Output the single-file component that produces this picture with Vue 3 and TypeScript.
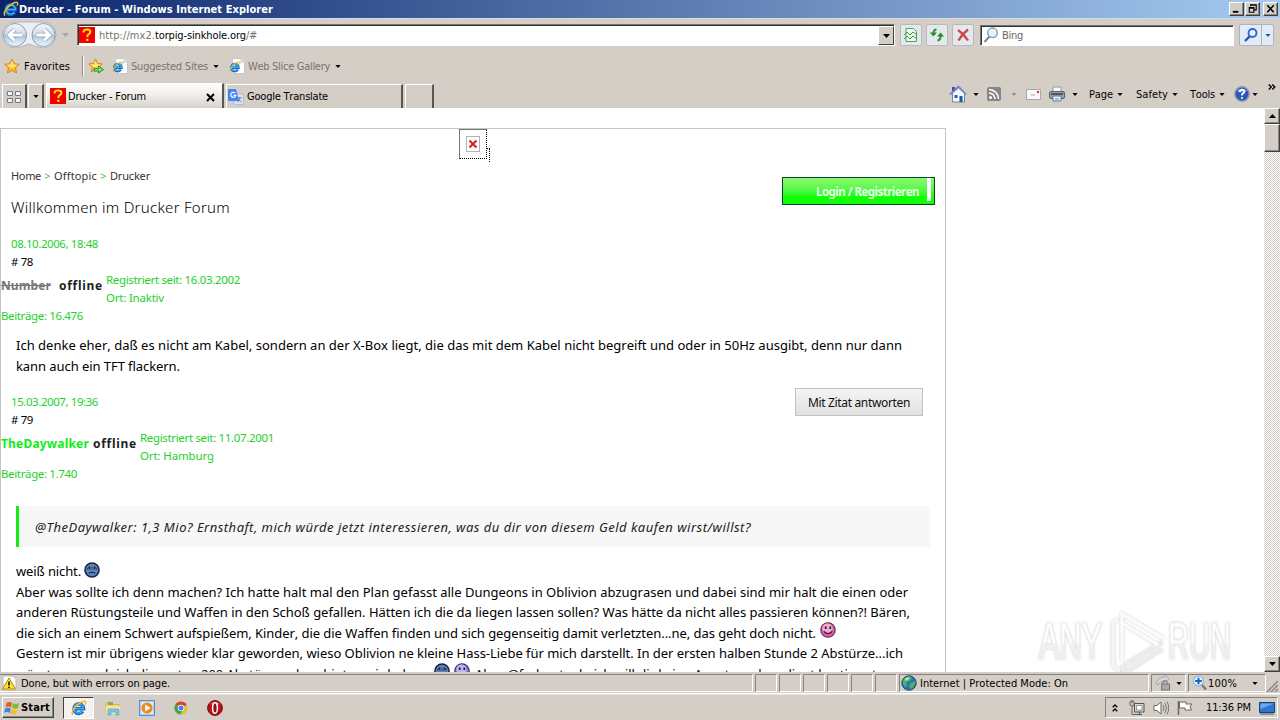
<script setup lang="ts">
import type { Directive } from 'vue'

/* Spreads letters so that a label takes the given width in pixels. */
const vFit: Directive<HTMLElement, number> = {
  mounted(el, { value }) {
    const natural = el.getBoundingClientRect().width
    const count = (el.textContent ?? '').length
    if (count > 0) el.style.letterSpacing = `${(value - natural) / count}px`
  },
}

interface Post {
  id: number
  date: string
  dateW: number
  user: string
  userW: number
  kind: string
  since: string
  place: string
  placeW: number
  count: string
  countW: number
}

const posts: Post[] = [
  { id: 78, date: '08.10.2006, 18:48', dateW: 87, user: 'Number', userW: 50, kind: 'struck', since: 'Registriert seit: 16.03.2002', place: 'Ort: Inaktiv', placeW: 58, count: 'Beiträge: 16.476', countW: 82 },
  { id: 79, date: '15.03.2007, 19:36', dateW: 87, user: 'TheDaywalker', userW: 88, kind: 'lime', since: 'Registriert seit: 11.07.2001', place: 'Ort: Hamburg', placeW: 74, count: 'Beiträge: 1.740', countW: 76 },
]
const first = posts[0]
const second = posts[1]
const panes = [1, 2, 3, 4, 5, 6]
</script>

<template>
  <svg class="defs" width="0" height="0">
    <symbol id="ie" viewBox="0 0 16 16">
      <path d="M4 8.8H12.6A4.8 4.8 0 1 0 11.8 11.4" fill="none" stroke="#1466bd" stroke-width="3.4" />
      <path d="M4 8.6H12.4A4.7 4.7 0 1 0 11.5 11.2" fill="none" stroke="#45b3f2" stroke-width="1.4" />
      <path d="M2.2 14.6C-.8 13 3.5 6.6 8.2 3.5C12.5.6 16 .2 14.2 4.6" fill="none" stroke="#f0b92c" stroke-width="1.5" />
    </symbol>
    <symbol id="iepage" viewBox="0 0 16 16">
      <path d="M3.5.5H12L15.5 4V15.5H3.5Z" fill="#fff" stroke="#c3c9d2" />
      <path d="M12 .5V4H15.5" fill="#dde5ee" stroke="#c3c9d2" />
      <use href="#ie" x="0" y="3" width="12" height="12" />
    </symbol>
    <symbol id="star" viewBox="0 0 16 16">
      <path d="M8 1L10.2 5.7L15.3 6.3L11.5 9.8L12.6 15L8 12.4L3.4 15L4.5 9.8L.7 6.3L5.8 5.7Z" fill="#fdbb2d" stroke="#d18a1c" />
      <path d="M8 2.500L9.700 6.500L13.500 7L10 9.500L8 10L5 9L2.500 7L6.300 6.500Z" fill="#ffe26a" />
    </symbol>
    <symbol id="q" viewBox="0 0 16 16">
      <rect width="16" height="16" fill="#f00000" />
      <path d="M4.600 5.500V4.500Q4.800 2.400 8 2.400T11.400 4.800Q11.400 6.200 9.800 7.200T8.300 10" fill="none" stroke="#ffe800" stroke-width="2" />
      <rect x="7.200" y="11.700" width="2.200" height="2.200" fill="#ffe800" />
    </symbol>
    <symbol id="down" viewBox="0 0 7 4"><path d="M0 0H7L3.500 4Z" fill="currentColor" /></symbol>
    <symbol id="sad" viewBox="0 0 16 16">
      <circle cx="8" cy="8" r="7" fill="#5a86bd" stroke="#16244a" stroke-width="1.600" />
      <path d="M3 6.800Q5 3.400 7.500 5.500Q8 6 8.500 5.500Q11 3.400 13 6.800Z" fill="#fff" stroke="#16244a" stroke-width=".9" />
      <path d="M5.500 5V7M10.500 5V7" stroke="#16244a" stroke-width="1.200" />
      <path d="M4.800 11.300Q8 9.200 11.200 11.300" fill="none" stroke="#16244a" stroke-width="1.200" />
    </symbol>
    <symbol id="pink" viewBox="0 0 16 16">
      <circle cx="8" cy="8" r="7.200" fill="#cf6aa0" stroke="#682b60" stroke-width="1.200" />
      <circle cx="7.400" cy="6.400" r="5" fill="#eeaccd" />
      <path d="M5.700 4.500V7M10.300 4.500V7" stroke="#321235" stroke-width="1.700" />
      <path d="M3.700 9.300Q8 14 12.300 9.300" fill="none" stroke="#6a124b" stroke-width="1.300" />
    </symbol>
  </svg>

  <div class="screen">
    <header class="title">
      <svg class="i16"><use href="#ie" /></svg>
      <b v-fit="254" class="fit">Drucker - Forum - Windows Internet Explorer</b>
      <span class="wb push"><svg viewBox="0 0 14 12"><path d="M3 9H9" stroke="#000" stroke-width="2" /></svg></span>
      <span class="wb"><svg viewBox="0 0 14 12"><path d="M5 3V1.500H11V7H9M5 2H11M3 5H9M3.500 4.500H8.500V9.500H3.500Z" fill="none" stroke="#000" stroke-width="1.200" /></svg></span>
      <span class="wb gap"><svg viewBox="0 0 14 12"><path d="M3.500 2L10.500 9.500M10.500 2L3.500 9.500" stroke="#000" stroke-width="1.700" /></svg></span>
    </header>

    <div class="nav">
      <svg class="arrows" viewBox="0 0 58 28">
        <defs>
          <linearGradient id="gl" x1="0" y1="0" x2="0" y2="1">
            <stop offset="0" stop-color="#f4f7fb" /><stop offset=".48" stop-color="#cfdae8" /><stop offset=".5" stop-color="#adc3da" /><stop offset="1" stop-color="#eef8fe" />
          </linearGradient>
        </defs>
        <path d="M15 1H43A13 13 0 0 1 43 27Q36 26 29 23Q22 26 15 27A13 13 0 0 1 15 1Z" fill="#eceef3" stroke="#b4b6be" />
        <circle cx="15" cy="14" r="11.500" fill="url(#gl)" stroke="#8f9cb0" />
        <circle cx="43.500" cy="14" r="11.500" fill="url(#gl)" stroke="#8f9cb0" />
        <path d="M22 14H10M14.500 8.500L9 14L14.500 19.500M36.500 14H48.500M44 8.500L49.500 14L44 19.500" fill="none" stroke="#8da3bd" stroke-width="4.400" />
        <path d="M22 14H10M14.500 8.500L9 14L14.500 19.500M36.500 14H48.500M44 8.500L49.500 14L44 19.500" fill="none" stroke="#fff" stroke-width="3" />
      </svg>
      <svg class="dn pale"><use href="#down" /></svg>
      <div class="address">
        <svg class="i16"><use href="#q" /></svg>
        <span class="url"><span v-fit="56" class="fit gray">http://mx2.</span><span v-fit="91" class="fit">torpig-sinkhole.org</span><span v-fit="11" class="fit gray">/#</span></span>
        <span class="drop"><svg class="dn"><use href="#down" /></svg></span>
      </div>
      <span class="tb first"><svg class="i16" viewBox="0 0 16 16"><path d="M3 1.500H10.500L13.500 4.500V14.500H3Z" fill="#eefaed" stroke="#54a35a" /><path d="M1 8L4 5L7 8L10 5L14 8M1 12L4 9L7 12L10 9L14 12" fill="none" stroke="#3c9a49" /></svg></span>
      <span class="tb"><svg class="i16" viewBox="0 0 16 16"><path d="M7.500 2.500Q4.500 2.500 4.500 6" fill="none" stroke="#2e9a36" stroke-width="2" /><path d="M.8 5.500H8L4.400 9.500ZM8 9.500H15.200L11.600 5.500Z" fill="#258d2d" /><path d="M8.500 13.500Q11.600 13.300 11.600 9" fill="none" stroke="#258d2d" stroke-width="2" /></svg></span>
      <span class="tb"><svg class="i16" viewBox="0 0 16 16"><path d="M3 3Q9 7 13 13.500M13 2.500Q7 7 3.500 13.500" fill="none" stroke="#cf4848" stroke-width="2.300" /></svg></span>
      <div class="search">
        <svg class="i16" viewBox="0 0 16 16"><path d="M6.500 9.500L1.500 15" stroke="#79899c" stroke-width="2" /><circle cx="9.500" cy="5.800" r="4.800" fill="#e8f4fc" stroke="#8b9cae" stroke-width="1.400" /></svg>
        <span v-fit="21" class="fit">Bing</span>
      </div>
      <div class="go">
        <span><svg class="i16" viewBox="0 0 16 16"><path d="M7 9L2 14" stroke="#2552b8" stroke-width="2.400" /><circle cx="9.500" cy="6" r="4" fill="#eaf3ff" stroke="#2a67d8" stroke-width="1.900" /></svg></span>
        <span class="small"><svg class="dn s blue"><use href="#down" /></svg></span>
      </div>
    </div>

    <div class="favs">
      <svg class="i16"><use href="#star" /></svg>
      <span v-fit="46" class="fit favlabel">Favorites</span>
      <i class="vline" />
      <svg class="i16 add" viewBox="0 0 16 16"><use href="#star" width="15" height="15" /><path d="M6 10.500H10.500V8L15.500 11.500L10.500 15V13H6Z" fill="#7ee06c" stroke="#2b8c2b" /></svg>
      <svg class="i16 pg1"><use href="#iepage" /></svg>
      <span v-fit="77" class="fit gray l1">Suggested Sites</span>
      <svg class="dn s"><use href="#down" /></svg>
      <svg class="i16 pg2"><use href="#iepage" /></svg>
      <span v-fit="82" class="fit gray l1">Web Slice Gallery</span>
      <svg class="dn s"><use href="#down" /></svg>
    </div>

    <div class="tabs">
      <span class="tab quick"><svg class="i16" viewBox="0 0 16 16"><path d="M1.500 2.500H6.500V6.500H1.500ZM9.500 2.500H14.500V6.500H9.500ZM1.500 9.500H6.500V13.500H1.500ZM9.500 9.500H14.500V13.500H9.500Z" fill="#f4f5f8" stroke="#6f7788" /></svg></span>
      <span class="tab qd"><svg class="dn s"><use href="#down" /></svg></span>
      <span class="tab active">
        <svg class="i16"><use href="#q" /></svg><span v-fit="78" class="fit">Drucker - Forum</span>
        <svg class="close" viewBox="0 0 9 9"><path d="M1 1L8 8M8 1L1 8" stroke="#000" stroke-width="2" /></svg>
      </span>
      <span class="tab other">
        <svg class="i16" viewBox="0 0 16 16"><rect x="6" y="5" width="9.500" height="10.500" rx="1" fill="#dde2ea" stroke="#a9b1be" stroke-width=".7" /><path d="M9 9H14M11.500 8V9Q11.500 12 9.500 13M10 10.500L13.500 13" stroke="#6385bf" fill="none" /><path d="M1 0H8L11 12H1Q0 12 0 11V1Q0 0 1 0Z" fill="#4285f4" /><path d="M7.200 4.200A2.500 2.500 0 1 0 7.800 6.300H5.500" fill="none" stroke="#fff" stroke-width="1.200" /></svg>
        <span v-fit="81" class="fit">Google Translate</span>
      </span>
      <span class="tab blank" />

      <div class="cmd">
        <svg class="i18" viewBox="0 0 18 18"><path d="M3 2H6V6H3Z" fill="#3b4aa8" /><path d="M3.500 8V17H15.500V8L9.500 3Z" fill="#f2f5fb" stroke="#7482a0" /><path d="M1 9.500L9.500 1.500L17 9.500" fill="none" stroke="#6f86c6" stroke-width="1.800" /><rect x="10.500" y="11" width="3" height="6" fill="#1d599f" /><rect x="5.500" y="10" width="3" height="3" fill="#315cae" /></svg>
        <svg class="dn s a"><use href="#down" /></svg>
        <svg class="i14 b" viewBox="0 0 14 14"><rect width="14" height="14" rx="2" fill="#858585" /><circle cx="3.500" cy="10.500" r="1.500" fill="#fff" /><path d="M2 6A6 6 0 0 1 8 12M2 2.500A9.500 9.500 0 0 1 11.500 12" fill="none" stroke="#fff" stroke-width="1.600" /></svg>
        <svg class="dn s pale2 c"><use href="#down" /></svg>
        <svg class="mail" viewBox="0 0 15 11"><rect x=".5" y=".5" width="14" height="10" fill="#f8f8f8" stroke="#aaa" /><rect x="11" y="2" width="2" height="2" fill="#d32b36" /><path d="M5 6H9" stroke="#aaa" /></svg>
        <svg class="i16 e" viewBox="0 0 16 16"><path d="M4 1H12V6H4Z" fill="#f8fbff" stroke="#999" /><rect x=".5" y="5.500" width="15" height="7" rx="1.500" fill="#9d9fa4" stroke="#5e6065" /><path d="M2 8H14" stroke="#3d4044" stroke-width="1.500" /><path d="M4 10H12V15H4Z" fill="#e5f2ff" stroke="#607a9a" /><path d="M6 13H10" stroke="#3a91d8" /></svg>
        <svg class="dn s f"><use href="#down" /></svg>
        <span v-fit="24" class="fit g">Page</span><svg class="dn s"><use href="#down" /></svg>
        <span v-fit="32" class="fit h">Safety</span><svg class="dn s"><use href="#down" /></svg>
        <span v-fit="25" class="fit k">Tools</span><svg class="dn s"><use href="#down" /></svg>
        <svg class="i16 m" viewBox="0 0 16 16"><circle cx="8" cy="8" r="7.200" fill="#2e56b4" stroke="#8b9bb7" stroke-width="1.500" /><path d="M3 5A6 5 0 0 1 13 5Q8 8 3 5" fill="#799ae0" /><path d="M5.700 6Q5.900 3.700 8 3.700T10.300 5.700Q10.300 7 8 8.200V9.500" fill="none" stroke="#fff" stroke-width="1.700" /><rect x="7.100" y="11" width="1.800" height="1.800" fill="#fff" /></svg>
        <svg class="dn s n"><use href="#down" /></svg>
        <svg class="more" viewBox="0 0 8 6"><path d="M.8.5L3.300 3L.8 5.500M4.300.5L6.800 3L4.300 5.500" fill="none" stroke="#000" stroke-width="1.400" /></svg>
      </div>
    </div>

    <main class="view">
      <div class="doc">
        <div class="sheet">
          <div class="broken">
            <svg viewBox="0 0 14 16"><rect x=".5" y=".5" width="13" height="15" fill="#fff" stroke="#b0b5b0" /><path d="M3.500 4.500L10.500 11.500M10.500 4.500L3.500 11.500" stroke="#cc2929" stroke-width="2.200" /></svg>
            <i class="tail" />
          </div>
          <div class="toprow">
            <div>
              <nav class="crumbs"><span v-fit="30" class="fit">Home</span><em>&gt;</em><span v-fit="43" class="fit">Offtopic</span><em>&gt;</em><span v-fit="40" class="fit">Drucker</span></nav>
              <h1><span v-fit="219" class="fit">Willkommen im Drucker Forum</span></h1>
            </div>
            <div class="login"><span v-fit="103" class="fit">Login / Registrieren</span><i /></div>
          </div>

          <section class="meta">
            <div class="in green"><span v-fit="first.dateW" class="fit">{{ first.date }}</span></div>
            <div class="in num"><span v-fit="22" class="fit"># {{ first.id }}</span></div>
            <div class="who">
              <b v-fit="first.userW" :class="['fit', first.kind]">{{ first.user }}</b>
              <b v-fit="44" class="fit off wide">offline</b>
              <div class="green"><div><span v-fit="134" class="fit">{{ first.since }}</span></div><div><span v-fit="first.placeW" class="fit">{{ first.place }}</span></div></div>
            </div>
            <div class="green"><span v-fit="first.countW" class="fit">{{ first.count }}</span></div>
          </section>
          <div class="body one">
            <div><span v-fit="886" class="fit">Ich denke eher, daß es nicht am Kabel, sondern an der X-Box liegt, die das mit dem Kabel nicht begreift und oder in 50Hz ausgibt, denn nur dann</span></div>
            <div><span v-fit="164" class="fit">kann auch ein TFT flackern.</span></div>
          </div>

          <section class="meta two">
            <div class="in green"><span v-fit="second.dateW" class="fit">{{ second.date }}</span></div>
            <div class="in num"><span v-fit="22" class="fit"># {{ second.id }}</span></div>
            <div class="who">
              <b v-fit="second.userW" :class="['fit', second.kind]">{{ second.user }}</b>
              <b v-fit="44" class="fit off">offline</b>
              <div class="green"><div><span v-fit="134" class="fit">{{ second.since }}</span></div><div><span v-fit="second.placeW" class="fit">{{ second.place }}</span></div></div>
            </div>
            <div class="green"><span v-fit="second.countW" class="fit">{{ second.count }}</span></div>
            <div class="reply"><span v-fit="102" class="fit">Mit Zitat antworten</span></div>
          </section>
          <blockquote><span v-fit="716" class="fit">@TheDaywalker: 1,3 Mio? Ernsthaft, mich würde jetzt interessieren, was du dir von diesem Geld kaufen wirst/willst?</span></blockquote>
          <div class="body last">
            <div><span v-fit="65" class="fit">weiß nicht.</span><svg class="smile one-up"><use href="#sad" /></svg></div>
            <div><span v-fit="892" class="fit">Aber was sollte ich denn machen? Ich hatte halt mal den Plan gefasst alle Dungeons in Oblivion abzugrasen und dabei sind mir halt die einen oder</span></div>
            <div><span v-fit="894" class="fit">anderen Rüstungsteile und Waffen in den Schoß gefallen. Hätten ich die da liegen lassen sollen? Was hätte da nicht alles passieren können?! Bären,</span></div>
            <div><span v-fit="800" class="fit">die sich an einem Schwert aufspießem, Kinder, die die Waffen finden und sich gegenseitig damit verletzten...ne, das geht doch nicht.</span><svg class="smile up"><use href="#pink" /></svg></div>
            <div><span v-fit="887" class="fit">Gestern ist mir übrigens wieder klar geworden, wieso Oblivion ne kleine Hass-Liebe für mich darstellt. In der ersten halben Stunde 2 Abstürze...ich</span></div>
            <div><span v-fit="412" class="fit">wüsste gern, ob ich die ersten 200 Abstürze schon hinter mir habe...</span><svg class="smile far"><use href="#sad" /></svg><svg class="smile violet"><use href="#pink" /></svg><span v-fit="445" class="fit tailtext">Aber @farbentaub, ich will dir keine Angst machen, liegt bestimmt nur an</span></div>
          </div>
        </div>
      </div>
      <div class="scroll">
        <span class="sb"><svg class="dn flip"><use href="#down" /></svg></span>
        <span class="sb thumb" />
        <span class="sb end"><svg class="dn"><use href="#down" /></svg></span>
      </div>
      <svg class="mark" viewBox="0 0 210 76">
        <defs>
          <linearGradient id="wm" x1="0" y1="0" x2="0" y2="1"><stop offset="0.500" stop-color="#fff" /><stop offset="0.560" stop-color="#f1f1f1" /><stop offset="1" stop-color="#e8e8e8" /></linearGradient>
          <filter id="sh" x="-10%" y="-10%" width="120%" height="120%"><feDropShadow dx="0" dy="0" stdDeviation="1.300" flood-color="#777" flood-opacity=".45" /></filter>
        </defs>
        <g filter="url(#sh)" fill="url(#wm)">
          <text x="9" y="54" textLength="63" lengthAdjust="spacingAndGlyphs">ANY</text>
          <text x="138" y="54" textLength="63" lengthAdjust="spacingAndGlyphs">RUN</text>
          <g fill="none" stroke-width="3.400">
            <path d="M88 14L83 17V61L90 66" stroke="#f6f6f6" />
            <path d="M132 44L93 69V61L132 37" stroke="#ececec" />
            <path d="M92 55V9L133 33M92 18L128 40" stroke="#fbfbfb" />
          </g>
        </g>
      </svg>
    </main>

    <div class="status">
      <div class="pane msg"><svg class="i16" viewBox="0 0 16 16"><path d="M2 1H12L15 4V15H2Z" fill="#fff" stroke="#bbb" /><path d="M8 3L14.500 14H1.500Z" fill="#ffe02e" stroke="#b88a00" /><path d="M8 6.500V10.500M8 11.700V13" stroke="#000" stroke-width="1.500" /></svg><span v-fit="149" class="fit">Done, but with errors on page.</span></div>
      <div v-for="p in panes" :key="p" class="pane cell" />
      <div class="pane zone"><svg class="i16" viewBox="0 0 16 16"><circle cx="8" cy="8" r="7.200" fill="#2675bd" stroke="#174d73" /><path d="M3 3.500Q8-.5 11 3L9 6L5 7L6 10L4 12Q0 8 3 3.500ZM10 8L14 6Q15 11 10 14L8 11Z" fill="#4fb553" /><path d="M4 4Q7 1.500 9 3L5 6Z" fill="#b8ecf1" /></svg><span v-fit="148" class="fit">Internet | Protected Mode: On</span></div>
      <div class="pane lock"><svg class="i16" viewBox="0 0 16 16"><path d="M1 9Q3 2 10 2V0L14 4L9 8V6Q5 6 3 10Z" fill="#d8d8d8" stroke="#aaa" /><path d="M8 9V7Q10 4 12 7V9" fill="none" stroke="#888" stroke-width="1.400" /><rect x="6.500" y="9" width="8" height="6" fill="#aaa" stroke="#777" /></svg><svg class="dn s"><use href="#down" /></svg></div>
      <div class="pane zoom"><svg class="i16" viewBox="0 0 16 16"><path d="M9.500 9.500L14 14.500" stroke="#777" stroke-width="2.200" /><circle cx="6.500" cy="6" r="5" fill="#e8f4ff" stroke="#8fb3d8" stroke-width="1.200" /><path d="M6.500 2.700V9.300M3.200 6H9.800" stroke="#1762bf" stroke-width="2" /></svg><span v-fit="29" class="fit">100%</span><svg class="dn s"><use href="#down" /></svg></div>
      <svg class="grip" viewBox="0 0 12 12"><path d="M1 12L12 1M5 12L12 5M9 12L12 9" stroke="#8a8680" stroke-width="1.500" /></svg>
    </div>

    <footer class="task">
      <div class="start"><svg class="i16" viewBox="0 0 16 16"><path d="M2.500 3Q5 1 8 3L7 7.500Q4.500 5.800 1.500 7.300Z" fill="#e8592c" /><path d="M9 3.300Q12 5 15 3L14 8Q11 9.500 8 7.800Z" fill="#7cbd34" /><path d="M1.200 8.500Q4 7 6.800 8.700L5.600 13Q3 11.200 0 12.700Z" fill="#3a87d8" /><path d="M7.700 9Q10.500 10.700 13.600 9.300L12.500 13.800Q9.500 15.500 6.500 13.500Z" fill="#f8bd26" /></svg><b v-fit="29" class="fit">Start</b></div>
      <div class="run"><svg class="i16"><use href="#ie" /></svg></div>
      <svg class="i16 t1" viewBox="0 0 16 16"><path d="M1 3H6L7 4.500H14V13H1Z" fill="#f1d277" stroke="#ccaa52" stroke-width=".7" /><path d="M3 2H8V5H3Z" fill="#7eb35e" /><path d="M1 6H15V14H1Z" fill="#f8e49a" /><path d="M3 15V10Q3 9 4 9H13Q14 9 14 10V15H11V12H6V15Z" fill="#7fc5e8" stroke="#4c9dc7" stroke-width=".6" /></svg>
      <svg class="i16 t2" viewBox="0 0 16 16"><rect x=".5" y=".5" width="15" height="15" fill="#a9cdf0" stroke="#5d90c4" /><rect x="2" y="2" width="12" height="12" fill="#dcecf9" /><circle cx="8" cy="8" r="5.600" fill="#f28a19" /><path d="M6.200 4.500L11.500 8L6.200 11.500Z" fill="#fff" /></svg>
      <svg class="i14 t3" viewBox="0 0 16 16"><circle cx="8" cy="8" r="7.500" fill="#e4c12c" /><path d="M8 8L1.500 4.200A7.500 7.500 0 0 1 14.500 4.200Z" fill="#d8432f" /><path d="M8 8L1.500 4.200A7.500 7.500 0 0 0 7 15.400L11 9Z" fill="#3da255" /><circle cx="8" cy="8" r="3.700" fill="#fff" /><circle cx="8" cy="8" r="2.900" fill="#4484e8" /></svg>
      <svg class="i16 t4" viewBox="0 0 16 16"><circle cx="8" cy="8" r="7.400" fill="#b81116" stroke="#7b0b0d" /><path d="M3 4Q8-.5 13 4Q8 6 3 4" fill="#e66663" /><ellipse cx="8" cy="8" rx="2.400" ry="5.300" fill="#8d1114" stroke="#fff" stroke-width="1.500" /></svg>
      <div class="tray">
        <svg class="chev" viewBox="0 0 6 8"><path d="M.7 3.300L3 1L5.300 3.300M.7 7.300L3 5L5.300 7.300" fill="none" stroke="#000" stroke-width="1.300" /></svg>
        <svg class="i16 n1" viewBox="0 0 16 16"><path d="M5.500 3.500H15V12H5.500ZM8 14.500H13M10.500 12V14.500" fill="#d8d8d8" stroke="#555" /><path d="M7.500 5.500H13V10H7.500Z" fill="#fff" stroke="#777" stroke-width=".7" /><path d="M1 1.500V5Q3 7 5 5V1.500M2.200 0V3M3.800 0V3M3 6V14.500H8" fill="none" stroke="#666" /></svg>
        <svg class="i16 n2" viewBox="0 0 16 16"><path d="M1 5.500H4L8 2V14L4 10.500H1Z" fill="#fff" stroke="#666" /><path d="M10 5Q12 8 10 11M12 3Q15 8 12 13M14 1.500Q17.500 8 14 14.500" fill="none" stroke="#777" /></svg>
        <svg class="i16 n3" viewBox="0 0 16 16"><path d="M1.500 1V15" stroke="#666" stroke-width="1.500" /><path d="M2.500 2H9V4H15L13 7L14.500 10H8V8H2.500Z" fill="#fff" stroke="#666" /></svg>
        <span v-fit="45" class="fit clock">11:36 PM</span>
        <svg class="i16 n4" viewBox="0 0 16 16"><path d="M.5 2.500H15.500V12.500H.5Z" fill="#2d76cf" stroke="#1a3e75" /><path d="M1.500 3.500H15L1.500 9Z" fill="#6ca9ec" /><path d="M1 14H15" stroke="#555" /></svg>
      </div>
    </footer>
  </div>
</template>

<style>
body { overflow: hidden; }
</style>

<style scoped>
.defs { position: absolute; }
.screen { width: 1280px; height: 720px; overflow: hidden; display: flex; flex-direction: column; background: #d5cec7; font: 11px/14px "DejaVu Sans Condensed", "DejaVu Sans", sans-serif; color: #000; }
.screen * { box-sizing: border-box; }
svg { display: block; flex: none; }
.fit { display: inline-block; white-space: pre; flex: none; font-kerning: none; font-variant-ligatures: none; }
.gray { color: #77736f; }
.i16 { width: 16px; height: 16px; }
.i18 { width: 18px; height: 18px; }
.i14 { width: 14px; height: 14px; }
.dn { width: 7px; height: 4px; }
.dn.s { width: 6px; height: 3px; }
.dn.pale { color: #aaa5a0; margin: 0 8px 0 4px; }
.pale2 { color: #96918c; }
.blue { color: #2455a8; }
.flip { transform: rotate(180deg); }

.title { height: 18px; flex: none; display: flex; align-items: center; padding: 0 2px 0 3px; color: #fff; background: linear-gradient(90deg, #0a246a, #a6caf0); }
.title b { margin-top: 2px; }
.wb { width: 15px; height: 14px; background: #d5cec7; border: 1px solid; border-color: #fff #404040 #404040 #fff; box-shadow: inset -1px -1px #888; margin-left: 1px; }
.wb svg { width: 13px; height: 12px; }
.push { margin-left: auto; }
.gap { margin-left: 3px; }

.nav { height: 34px; flex: none; display: flex; align-items: center; border-top: 1px solid #d5dbe6; padding-bottom: 1px; }
.arrows { width: 58px; height: 28px; }
.address { width: 818px; height: 22px; border: 1px solid; border-color: #77736f #fff #fff #77736f; box-shadow: inset 1px 1px #33302e; background: #fff; display: flex; align-items: center; padding-left: 1px; }
.url { margin-left: 4px; padding-top: 2px; display: flex; }
.drop { width: 16px; height: 19px; margin: 1px 0 0 auto; background: #d5cec7; border: 1px solid; border-color: #fff #404040 #404040 #fff; display: flex; align-items: center; justify-content: center; }
.tb { width: 22px; height: 22px; border: 1px solid #b4b9c3; border-radius: 2px; background: #e5e8ed; display: flex; align-items: center; justify-content: center; margin-right: 4px; }
.tb.first { margin-left: 5px; }
.search { width: 254px; height: 21px; margin-left: 2px; border: 1px solid; border-color: #77736f #fff #fff #77736f; box-shadow: inset 1px 1px #33302e; background: #fff; color: #666; display: flex; align-items: center; padding-left: 2px; }
.search .fit { margin: 2px 0 0 3px; }
.go { width: 35px; height: 22px; margin-left: 5px; border: 1px solid #a9b4c6; border-radius: 2px; background: #e5ebf4; display: flex; }
.go span { width: 21px; display: flex; align-items: center; justify-content: center; }
.go .small { width: 12px; border-left: 1px solid #a9b4c6; }

.favs { height: 28px; flex: none; display: flex; align-items: center; padding-left: 4px; }
.favlabel { margin: 1px 0 0 4px; }
.vline { width: 2px; height: 20px; margin: 0 4px 0 12px; border-left: 1px solid #8e8984; border-right: 1px solid #fff; }
.add { margin-right: 8px; }
.l1 { margin: 2px 5px 0 3px; }
.pg2 { margin-left: 10px; }

.tabs { height: 28px; flex: none; display: flex; align-items: flex-end; padding-left: 2px; background: linear-gradient(#d5cec7 50%, #d1cec5); }
.tab { height: 24px; border-top: 1px solid #fff; border-left: 1px solid #fff; border-right: 2px solid #5b5652; display: flex; align-items: center; }
.quick { width: 25px; padding-left: 3px; }
.qd { width: 16px; margin-left: 1px; justify-content: center; }
.active { width: 178px; height: 25px; margin-left: 2px; padding-left: 3px; gap: 2px; background: linear-gradient(#fff, #f0eeea 45%, #d7d2cb); }
.active .fit { margin-top: 2px; }
.close { width: 9px; height: 9px; margin: 2px 7px 0 auto; }
.other { width: 177px; margin-left: 2px; padding-left: 1px; gap: 3px; }
.other .fit { margin-top: 1px; }
.blank { width: 29px; margin-left: 2px; }
.cmd { align-self: stretch; margin-left: auto; display: flex; align-items: center; padding-right: 4px; }
.a { margin: 0 8px 0 6px; }
.c { margin: 0 9px 0 10px; }
.mail { width: 15px; height: 11px; margin-right: 8px; }
.f { margin: 0 11px 0 7px; }
.cmd .fit { margin-top: 1px; }
.cmd .g { margin-right: 4px; }
.cmd .h { margin-right: 4px; margin-left: 13px; }
.cmd .k { margin-right: 4px; margin-left: 12px; }
.m { margin-left: 9px; }
.n { margin: 0 10px 0 2px; }
.more { width: 8px; height: 6px; margin-bottom: 14px; }

.view { position: relative; height: 564px; flex: none; display: flex; background: #fff; overflow: hidden; }
.doc { width: 1264px; padding-top: 20px; font-family: "Noto Sans", "Open Sans", sans-serif; }
.sheet { width: 946px; height: 700px; border: 1px solid #c4c4c4; }
.broken { position: relative; width: 28px; height: 30px; margin: 0 0 0 458px; border: 1px solid #777; border-right: 1px dotted #000; border-bottom: 1px dotted #000; display: flex; justify-content: center; align-items: center; }
.broken svg { width: 14px; height: 16px; }
.tail { position: absolute; left: 27px; top: 18px; width: 3px; height: 14px; border-right: 1px dotted #000; border-top: 1px dotted #000; }
.toprow { display: flex; justify-content: space-between; padding: 7px 10px 0 10px; height: 76px; }
.crumbs { height: 20px; line-height: 20px; font-size: 11px; color: #333; display: flex; }
.crumbs em { font-style: normal; color: #30c840; width: 13px; text-align: center; }
h1 { margin: 11px 0 0; font: 300 15px/20px "Noto Sans", "Open Sans", sans-serif; color: #000; }
.login { position: relative; width: 153px; height: 28px; margin-top: 11px; border: 1px solid #06422c; background: linear-gradient(#8cf86c, #5cf850 40%, #10ff08 75%); color: #e7ffe4; font: bold 11.500px/27px "Noto Sans", sans-serif; padding-left: 33px; }
.login i { position: absolute; right: 3px; top: 0; width: 4px; height: 23px; background: #fff; }
.meta { position: relative; height: 90px; font-size: 11.500px; line-height: 18px; }
.in { padding-left: 10px; }
.green { color: #1fd02c; }
.num { color: #000; }
.who { height: 36px; display: flex; }
.who b { font-size: 12px; line-height: 29px; height: 36px; }
.who .green { margin-left: -1px; }
.struck { color: #777; text-decoration: line-through; }
.lime { color: #10ee18; }
.off { margin: 0 4px 0 4px; color: #222; }
.off.wide { margin-left: 8px; }
.body { padding-left: 15px; font-size: 13px; line-height: 21px; color: #000; }
.body > div { display: flex; white-space: nowrap; }
.one { height: 68px; padding-top: 10px; }
.two { height: 113px; }
.reply { position: absolute; right: 22px; top: -5px; width: 128px; height: 28px; border: 1px solid #c2c2c2; background: linear-gradient(#f5f5f5, #e0e0e0); font: 12px/28px "Noto Sans", sans-serif; padding-left: 12px; color: #111; }
blockquote { height: 41px; width: 914px; margin: 0 0 0 15px; padding-left: 16px; border-left: 3px solid #10ee18; background: #f7f7f7; font-style: italic; font-size: 13px; line-height: 42px; color: #222; }
.last { padding-top: 14px; line-height: 20.600px; }
.smile { width: 16px; height: 16px; margin: 2px 0 0 4px; }
.one-up { margin-top: 1px; margin-left: 3px; }
.up { margin-top: -1px; }
.far { margin-left: 6px; margin-top: -1px; }
.violet { filter: hue-rotate(-65deg); margin-top: -1px; }
.tailtext { margin-left: 5px; }

.scroll { width: 16px; display: flex; flex-direction: column; background: repeating-conic-gradient(#fff 0 25%, #d5cec7 0 50%) 0 0 / 2px 2px; }
.sb { height: 16px; background: #d5cec7; border: 1px solid; border-color: #fff #404040 #404040 #fff; box-shadow: inset -1px -1px #888; display: flex; align-items: center; justify-content: center; }
.thumb { height: 28px; }
.end { margin-top: auto; }
.mark { position: absolute; left: 1030px; top: 497px; width: 210px; height: 76px; }
.mark text { font: 51px "Liberation Sans", sans-serif; stroke: #f3f3f3; stroke-width: 1px; }

.status { height: 22px; flex: none; display: flex; padding-top: 2px; border-bottom: 1px solid #fff; }
.pane { height: 18px; border: 1px solid; border-color: #85807b #fff #fff #85807b; display: flex; align-items: center; }
.pane .fit { margin-top: 2px; }
.msg { width: 753px; padding-left: 1px; gap: 4px; border-left: 0; }
.cell { width: 22px; margin-left: 2px; }
.zone { width: 250px; margin-left: 2px; padding-left: 1px; gap: 3px; }
.lock { width: 35px; margin-left: 2px; padding-left: 3px; gap: 5px; }
.zoom { width: 78px; margin-left: 2px; padding-left: 3px; }
.zoom .fit { margin-right: 15px; }
.grip { width: 12px; height: 12px; margin-top: 6px; }

.task { height: 26px; flex: none; border-top: 1px solid #e9e5e0; display: flex; align-items: center; padding-left: 2px; }
.start { width: 52px; height: 21px; border: 1px solid; border-color: #fff #404040 #404040 #fff; box-shadow: inset -1px -1px #888; display: flex; align-items: center; padding-left: 1px; gap: 1px; }
.run { width: 31px; height: 22px; margin-left: 9px; border: 1px solid; border-color: #404040 #fff #fff #404040; background: #f4f1ee; display: flex; align-items: center; justify-content: center; }
.t1 { margin-left: 11px; }
.t2 { margin-left: 18px; }
.t3 { margin-left: 19px; }
.t4 { margin-left: 19px; }
.tray { width: 173px; height: 21px; margin: 0 2px 0 auto; border: 1px solid; border-color: #85807b #fff #fff #85807b; display: flex; align-items: center; padding-left: 6px; }
.chev { width: 6px; height: 8px; }
.n1 { margin-left: 11px; }
.n2 { margin-left: 8px; }
.n3 { margin-left: 8px; }
.clock { margin-left: 13px; }
.n4 { margin-left: 8px; }
</style>
